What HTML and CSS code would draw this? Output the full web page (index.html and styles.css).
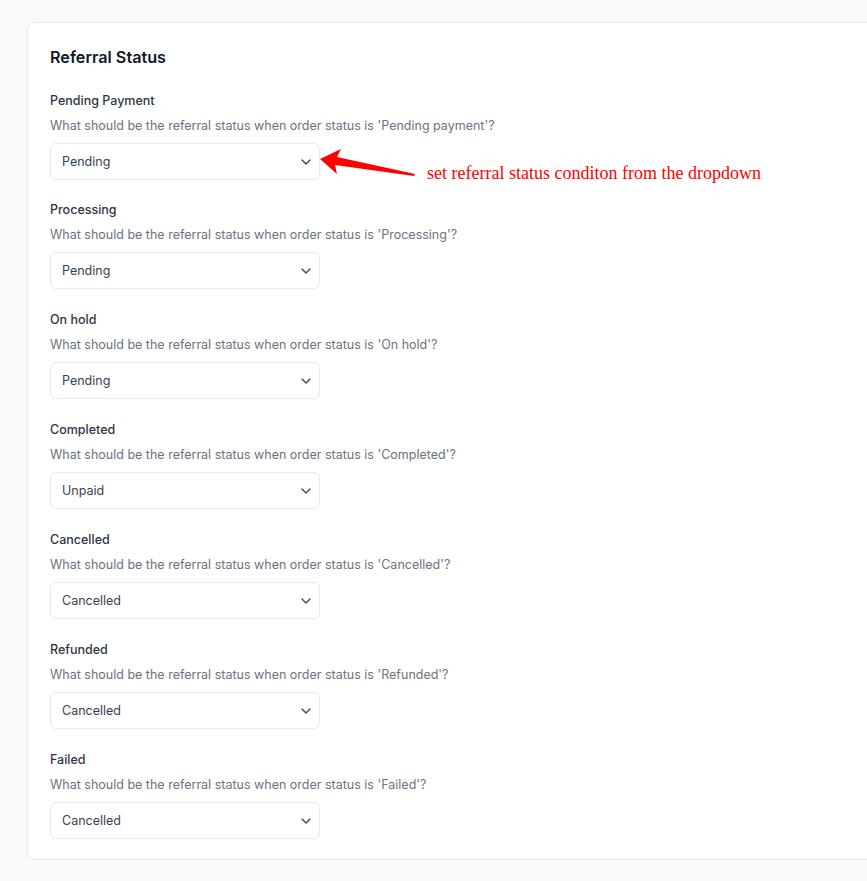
FILE: index.html
```html
<!DOCTYPE html>
<html>
<head>
<meta charset="utf-8">
<link rel="stylesheet" href="styles.css">
</head>
<body>
<div class="page">
  <section class="card">
    <h2 class="title">Referral Status</h2>

    <div class="field field-first">
      <div class="label">Pending Payment</div>
      <div class="desc">What should be the referral status when order status is 'Pending payment'?</div>
      <div class="select-row">
        <div class="select"><span>Pending</span><svg class="chev" width="10" height="6" viewBox="0 0 10 6"><path d="M1 1l4 4 4-4" fill="none" stroke="#374151" stroke-width="1.3" stroke-linecap="round" stroke-linejoin="round"/></svg></div>
        <div class="annotation">
          <svg class="arrow" width="100" height="32" viewBox="0 0 100 32"><polygon points="0,11 21,1 17,9 95,26 94,28 15,17 17,26" fill="#ff0000"/></svg>
          <span class="note">set referral status conditon from the dropdown</span>
        </div>
      </div>
    </div>

    <div class="field field-second">
      <div class="label">Processing</div>
      <div class="desc">What should be the referral status when order status is 'Processing'?</div>
      <div class="select"><span>Pending</span><svg class="chev" width="10" height="6" viewBox="0 0 10 6"><path d="M1 1l4 4 4-4" fill="none" stroke="#374151" stroke-width="1.3" stroke-linecap="round" stroke-linejoin="round"/></svg></div>
    </div>

    <div class="field">
      <div class="label">On hold</div>
      <div class="desc">What should be the referral status when order status is 'On hold'?</div>
      <div class="select"><span>Pending</span><svg class="chev" width="10" height="6" viewBox="0 0 10 6"><path d="M1 1l4 4 4-4" fill="none" stroke="#374151" stroke-width="1.3" stroke-linecap="round" stroke-linejoin="round"/></svg></div>
    </div>

    <div class="field">
      <div class="label">Completed</div>
      <div class="desc">What should be the referral status when order status is 'Completed'?</div>
      <div class="select"><span>Unpaid</span><svg class="chev" width="10" height="6" viewBox="0 0 10 6"><path d="M1 1l4 4 4-4" fill="none" stroke="#374151" stroke-width="1.3" stroke-linecap="round" stroke-linejoin="round"/></svg></div>
    </div>

    <div class="field">
      <div class="label">Cancelled</div>
      <div class="desc">What should be the referral status when order status is 'Cancelled'?</div>
      <div class="select"><span>Cancelled</span><svg class="chev" width="10" height="6" viewBox="0 0 10 6"><path d="M1 1l4 4 4-4" fill="none" stroke="#374151" stroke-width="1.3" stroke-linecap="round" stroke-linejoin="round"/></svg></div>
    </div>

    <div class="field">
      <div class="label">Refunded</div>
      <div class="desc">What should be the referral status when order status is 'Refunded'?</div>
      <div class="select"><span>Cancelled</span><svg class="chev" width="10" height="6" viewBox="0 0 10 6"><path d="M1 1l4 4 4-4" fill="none" stroke="#374151" stroke-width="1.3" stroke-linecap="round" stroke-linejoin="round"/></svg></div>
    </div>

    <div class="field">
      <div class="label">Failed</div>
      <div class="desc">What should be the referral status when order status is 'Failed'?</div>
      <div class="select"><span>Cancelled</span><svg class="chev" width="10" height="6" viewBox="0 0 10 6"><path d="M1 1l4 4 4-4" fill="none" stroke="#374151" stroke-width="1.3" stroke-linecap="round" stroke-linejoin="round"/></svg></div>
    </div>
  </section>
</div>
</body>
</html>
```

FILE: styles.css
```css
html, body {
  margin: 0;
  padding: 0;
  background: #f8f9fb;
  overflow: hidden;
}
body {
  font-family: Inter, "Noto Sans", sans-serif;
  -webkit-font-smoothing: antialiased;
}
.page {
  padding: 22px 0 0 27px;
  width: 1000px;
}
.card {
  width: 900px;
  box-sizing: border-box;
  background: #ffffff;
  border: 1px solid #e6e8ee;
  border-radius: 7px;
  padding: 22px 22px 21px 22px;
  height: 838px;
}
.title {
  margin: 0;
  font-size: 16.2px;
  line-height: 24px;
  font-weight: 600;
  color: #111827;
}
.field {
  margin-top: 21px;
  display: flex;
  flex-direction: column;
}
.field-first {
  margin-top: 22px;
}
.field-second {
  margin-top: 20px;
}
.label {
  font-size: 12.5px;
  line-height: 20px;
  font-weight: 500;
  color: #2d3644;
}
.desc {
  margin-top: 5px;
  font-size: 12.5px;
  line-height: 20px;
  color: #6b7280;
}
.select-row {
  display: flex;
  align-items: flex-start;
  height: 44px;
}
.select {
  margin-top: 7px;
  width: 270px;
  height: 37px;
  box-sizing: border-box;
  border: 1px solid #e7e8f3;
  border-radius: 6px;
  background: #ffffff;
  display: flex;
  align-items: center;
  justify-content: space-between;
  padding: 0 8px 0 11px;
  font-size: 12.5px;
  color: #374151;
}
.chev {
  display: block;
}
.annotation {
  display: flex;
  align-items: flex-start;
  margin-top: 12px;
}
.arrow {
  display: block;
  flex: none;
}
.note {
  margin-left: 7px;
  margin-top: 14px;
  font-family: "Liberation Serif", "Times New Roman", serif;
  font-size: 18px;
  line-height: 22px;
  color: #ff0000;
  white-space: nowrap;
}
```
